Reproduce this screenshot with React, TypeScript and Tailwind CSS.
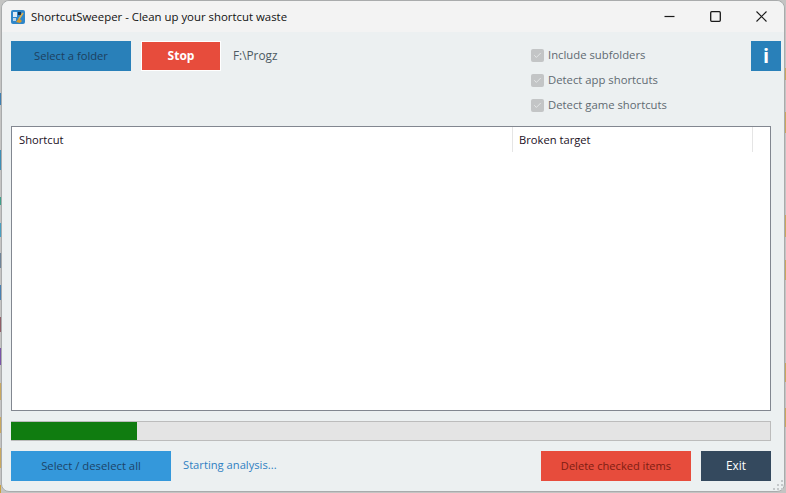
import { Check } from 'lucide-react'

const font = { fontFamily: '"Open Sans", "Noto Sans", sans-serif' }

// desktop icons peeking out behind the window edges
const leftPeek = [
  { top: 93, h: 12, color: '#3f7fb0' },
  { top: 150, h: 20, color: '#3f8fb5' },
  { top: 197, h: 8, color: '#3f9f8a' },
  { top: 223, h: 14, color: '#4a9fc0' },
  { top: 253, h: 15, color: '#6f8498' },
  { top: 285, h: 15, color: '#4a80b0' },
  { top: 317, h: 15, color: '#8f5f68' },
  { top: 348, h: 17, color: '#7a55a8' },
  { top: 383, h: 17, color: '#c9a860' },
  { top: 417, h: 16, color: '#c9a860' },
  { top: 448, h: 20, color: '#c9a860' },
  { top: 485, h: 8, color: '#c9a040' },
]
const rightPeek = [
  { top: 68, h: 12 },
  { top: 112, h: 21 },
  { top: 215, h: 22 },
  { top: 260, h: 20 },
  { top: 363, h: 19 },
  { top: 408, h: 19 },
]

function AppIcon() {
  return (
    <svg width="14" height="14" viewBox="0 0 14 14" className="shrink-0">
      <rect x="0" y="0" width="14" height="14" rx="2" fill="#2f86c9" />
      <rect x="2" y="2" width="4" height="5" fill="#dfeaf4" />
      <rect x="7" y="2" width="3" height="3" fill="#16324f" />
      <path d="M12 3 L8 9" stroke="#e2b04a" strokeWidth="1.5" />
      <path d="M5 12 L8 8 L11 11 L9 13 Z" fill="#d99a2b" />
      <rect x="2" y="8" width="3" height="3" fill="#b9d4ea" />
    </svg>
  )
}

function WindowControls() {
  return (
    <div className="ml-auto mr-[17px] flex items-center gap-[35px] text-[#1a1a1a]">
      <svg width="11" height="11" viewBox="0 0 11 11" fill="none" stroke="currentColor" strokeWidth="1.2">
        <path d="M0.5 5.5H10.5" />
      </svg>
      <svg width="11" height="11" viewBox="0 0 11 11" fill="none" stroke="currentColor" strokeWidth="1.3">
        <rect x="0.7" y="0.7" width="9.6" height="9.6" rx="1" />
      </svg>
      <svg width="11" height="11" viewBox="0 0 11 11" fill="none" stroke="currentColor" strokeWidth="1.1">
        <path d="M0.5 0.5L10.5 10.5M10.5 0.5L0.5 10.5" />
      </svg>
    </div>
  )
}

function Option({ label }: { label: string }) {
  return (
    <div className="flex h-[13px] items-center gap-[4px]">
      <span className="flex h-[13px] w-[13px] items-center justify-center rounded-[2px] bg-[#c3c5c6]">
        <Check className="h-[9px] w-[9px] text-[#eef0f0]" strokeWidth={2} />
      </span>
      <span className="pb-[2px] text-[11.3px] leading-none text-[#5f6a72]">{label}</span>
    </div>
  )
}

function ResizeGrip() {
  return (
    <svg width="10" height="10" viewBox="0 0 10 10" className="absolute bottom-[1px] right-[1px]" fill="#c4c8ca">
      <rect x="8" y="0" width="2" height="2" />
      <rect x="4" y="4" width="2" height="2" />
      <rect x="8" y="4" width="2" height="2" />
      <rect x="0" y="8" width="2" height="2" />
      <rect x="4" y="8" width="2" height="2" />
      <rect x="8" y="8" width="2" height="2" />
    </svg>
  )
}

export default function App() {
  return (
    <div className="relative h-[493px] w-[786px] overflow-hidden bg-[#c4c4c3] px-px" style={font}>
      {leftPeek.map((s) => (
        <span key={s.top} className="absolute left-0 w-px" style={{ top: s.top, height: s.h, backgroundColor: s.color }} />
      ))}
      {rightPeek.map((s) => (
        <span key={s.top} className="absolute right-0 w-px bg-[#c9a860]" style={{ top: s.top, height: s.h }} />
      ))}
      <div className="relative flex h-[492px] flex-col rounded-[8px] border border-[#a9abac] bg-[#ecf0f1]">
        {/* title bar */}
        <div className="flex h-[31px] shrink-0 items-center rounded-t-[8px] bg-[#f3f3f3] pl-[9px]">
          <AppIcon />
          <span className="ml-[6px] text-[11.4px] leading-none text-[#111]">
            ShortcutSweeper - Clean up your shortcut waste
          </span>
          <WindowControls />
        </div>

        <div className="flex min-h-0 flex-1 flex-col pl-[9px] pr-[13px] pt-[9px]">
          {/* toolbar */}
          <div className="flex h-[85px] shrink-0 items-start">
            <button className="h-[30px] w-[120px] bg-[#2980b9] text-[11.2px] text-[#1d3f5e]">Select a folder</button>
            <button className="ml-[10px] h-[30px] w-[80px] border border-white bg-[#e74c3c] text-[12px] font-bold text-white">Stop</button>
            <span className="ml-[12px] mt-[6px] text-[11.8px] leading-[16px] text-[#4d5a62]">F:\Progz</span>
            <div className="ml-auto mt-[8px] flex w-[220px] flex-col gap-[12px]">
              <Option label="Include subfolders" />
              <Option label="Detect app shortcuts" />
              <Option label="Detect game shortcuts" />
            </div>
            <button className="mr-[-10px] flex h-[30px] w-[30px] items-center justify-center bg-[#2980b9] text-[20px] font-bold leading-none text-white">i</button>
          </div>

          {/* shortcut list */}
          <div className="min-h-0 flex-1 border border-[#828790] bg-white">
            <div className="flex h-[25px] text-[11.2px] leading-[25px] text-[#1b1024]">
              <div className="w-[501px] border-r border-[#e5e5e5] pl-[7px]">Shortcut</div>
              <div className="w-[240px] border-r border-[#e5e5e5] pl-[6px]">Broken target</div>
            </div>
          </div>

          {/* progress */}
          <div className="mt-[10px] h-[20px] shrink-0 border-y border-r border-[#bcbcbc] bg-[#e4e4e4]">
            <div className="h-full w-[126px] bg-[#107c10]" />
          </div>

          {/* actions */}
          <div className="mb-[10px] mt-[10px] flex h-[30px] shrink-0 items-center">
            <button className="h-[30px] w-[160px] bg-[#3498db] text-[11.3px] text-[#1d4468]">Select / deselect all</button>
            <span className="ml-[12px] pb-[2px] text-[11.2px] text-[#2f80c2]">Starting analysis...</span>
            <button className="ml-auto h-[30px] w-[150px] bg-[#e74c3c] text-[11.1px] text-[#7d1d12]">Delete checked items</button>
            <button className="ml-[10px] h-[30px] w-[70px] bg-[#34495e] text-[11.8px] text-white">Exit</button>
          </div>
        </div>
        <ResizeGrip />
      </div>
    </div>
  )
}
